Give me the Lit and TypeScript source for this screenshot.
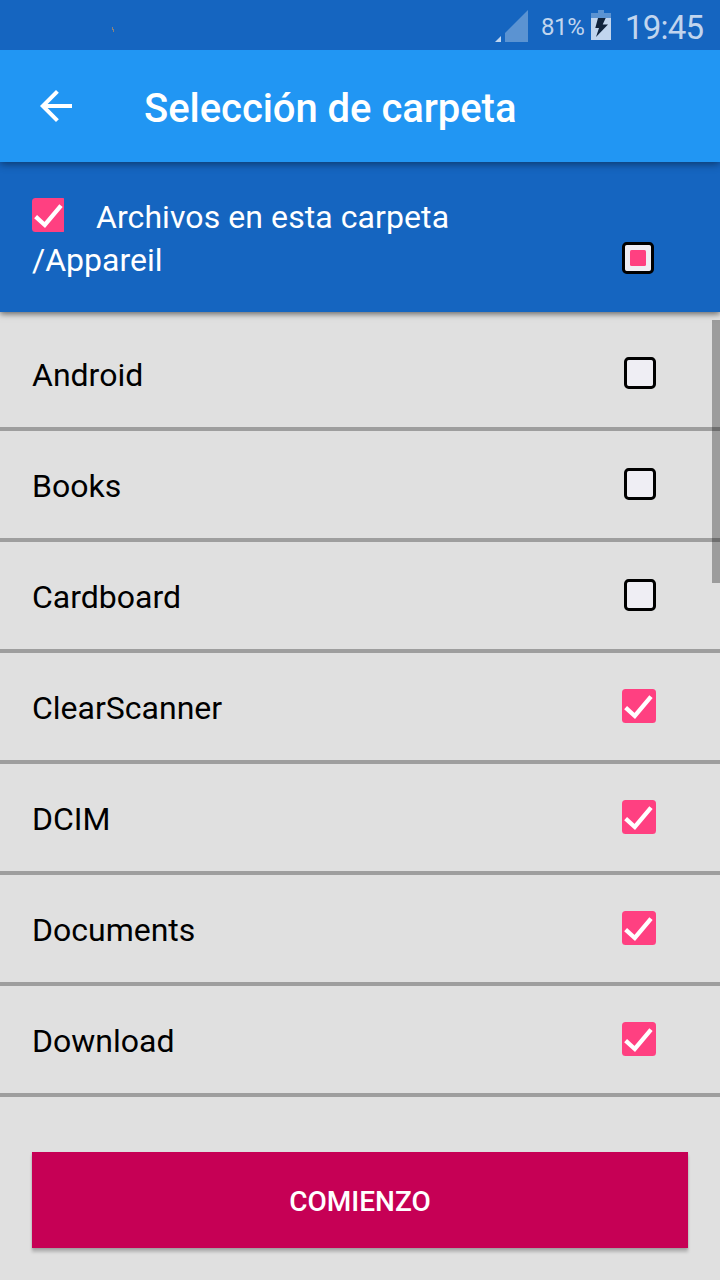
import { LitElement, html, css, svg } from "lit";
import { customElement, property } from "lit/decorators.js";

type CheckState = "on" | "off" | "partial";

@customElement("tri-checkbox")
class TriCheckbox extends LitElement {
  @property() state: CheckState = "off";

  static styles = css`
    :host { display: block; width: 34px; height: 34px; overflow: hidden; }
    svg { display: block; }
  `;

  render() {
    if (this.state === "on") {
      return html`<svg width="34" height="34" viewBox="0 0 34 34">
        <rect width="34" height="34" rx="3.5" fill="#ff4081" />
        <path d="M3.6 18.6 L12.8 27 L29 7.6" fill="none" stroke="#fff" stroke-width="4.3" />
      </svg>`;
    }
    const x = this.state === "off" ? 2 : 0;
    const y = this.state === "off" ? 1 : 0;
    return html`<svg width="34" height="34" viewBox="0 0 34 34">
      <rect x=${x + 1.5} y=${y + 1.5} width="29" height="29" rx="3.2" fill="#efeef4" stroke="#000" stroke-width="3" />
      ${this.state === "partial" ? svg`<rect x="8" y="8" width="16" height="16" rx="1.5" fill="#ff4081" />` : null}
    </svg>`;
  }
}

@customElement("status-bar")
class StatusBar extends LitElement {
  static styles = css`
    :host { display: flex; height: 50px; background: #1565c0; color: #c1d5ee; justify-content: flex-end; box-sizing: border-box; padding-right: 16px; }
    .speck { display: block; margin-right: auto; margin-left: 110px; }
    .signal { display: block; }
    .percent { font-size: 24px; letter-spacing: -0.4px; line-height: 54px; width: 43px; margin-left: 13px; white-space: nowrap; }
    .battery { display: block; margin-left: 7px; }
    .clock { font-size: 33px; letter-spacing: -0.8px; line-height: 56px; margin-left: 14px; width: 79px; white-space: nowrap; }
  `;

  render() {
    return html`
      <svg class="speck" width="8" height="50"><path d="M2.5 27v3M3.5 29v3" stroke="#8a827c" stroke-width="1" /></svg>
      <svg class="signal" width="34" height="50">
        <path d="M1 42L7 36V42Z" fill="#c1d5ee" />
        <path d="M11 42V33L34 10V42Z" fill="#5b93d2" />
      </svg>
      <span class="percent">81%</span>
      <svg class="battery" width="20" height="50">
        <path d="M7 10H13V13H20V18H0V13H7Z" fill="#5b93d2" />
        <path d="M0 18H20V40H0Z" fill="#c1d5ee" />
        <path d="M7 18H14.7L11.7 24.5H17L5 37L8 28H4.3Z" fill="#10233c" />
      </svg>
      <span class="clock">19:45</span>
    `;
  }
}

@customElement("app-root")
class AppRoot extends LitElement {
  private folders: { name: string; state: CheckState }[] = [
    { name: "Android", state: "off" },
    { name: "Books", state: "off" },
    { name: "Cardboard", state: "off" },
    { name: "ClearScanner", state: "on" },
    { name: "DCIM", state: "on" },
    { name: "Documents", state: "on" },
    { name: "Download", state: "on" },
  ];

  static styles = css`
    :host { display: flex; flex-direction: column; position: relative; width: 720px; height: 1280px; overflow: hidden; background: #e0e0e0; color: #000; font-family: Roboto, sans-serif; font-size: 32px; }
    .toolbar { display: flex; height: 112px; background: #2196f3; color: #fff; position: relative; z-index: 2; box-shadow: 0 2px 8px rgba(0, 0, 0, 0.45); clip-path: inset(0 0 -12px 0); }
    .back { display: block; margin: 40px 0 0 40px; flex: none; }
    .title { margin: 0 0 0 72px; font-size: 40px; font-weight: 500; line-height: 118px; letter-spacing: -0.05px; white-space: nowrap; }
    .current { display: flex; justify-content: space-between; box-sizing: border-box; height: 150px; padding: 36px 64px 0 32px; background: #1565c0; color: #fff; position: relative; z-index: 1; box-shadow: 0 2px 6px rgba(0, 0, 0, 0.55); }
    .label { display: flex; height: 38px; line-height: 38px; letter-spacing: 0.08px; white-space: nowrap; }
    .files { width: 32px; margin-right: 32px; }
    .path { height: 46px; line-height: 48px; }
    .partial { margin-top: 44px; }
    .list { margin: 8px 0 0; padding: 0; list-style: none; }
    .row { display: flex; justify-content: space-between; height: 107px; padding: 0 64px 0 32px; border-bottom: 4px solid #9e9e9e; }
    .name { line-height: 110px; }
    .row tri-checkbox { margin-top: 36px; }
    .thumb { position: absolute; right: 0; top: 320px; width: 8px; height: 263px; background: rgba(0, 0, 0, 0.3); }
    .start { display: block; flex: none; margin: 55px 32px 0; height: 96px; padding: 1px 0 0; border: 0; background: #c60055; color: #fff; font: 500 28px/98px Roboto, sans-serif; box-shadow: 0 4px 3px rgba(0, 0, 0, 0.2), 0 1px 2px rgba(0, 0, 0, 0.15); }
  `;

  render() {
    return html`
      <status-bar></status-bar>
      <header class="toolbar">
        <svg class="back" width="32" height="32" viewBox="4 4 16 16"><path d="M20 11H7.83l5.59-5.59L12 4l-8 8 8 8 1.41-1.41L7.83 13H20v-2z" fill="#fff" /></svg>
        <h1 class="title">Selección de carpeta</h1>
      </header>
      <section class="current">
        <div>
          <div class="label"><tri-checkbox class="files" state="on"></tri-checkbox>Archivos en esta carpeta</div>
          <div class="path">/Appareil</div>
        </div>
        <tri-checkbox class="partial" state="partial"></tri-checkbox>
      </section>
      <ul class="list">
        ${this.folders.map(
          (f) => html`<li class="row"><span class="name">${f.name}</span><tri-checkbox state=${f.state}></tri-checkbox></li>`
        )}
      </ul>
      <div class="thumb"></div>
      <button class="start">COMIENZO</button>
    `;
  }
}
